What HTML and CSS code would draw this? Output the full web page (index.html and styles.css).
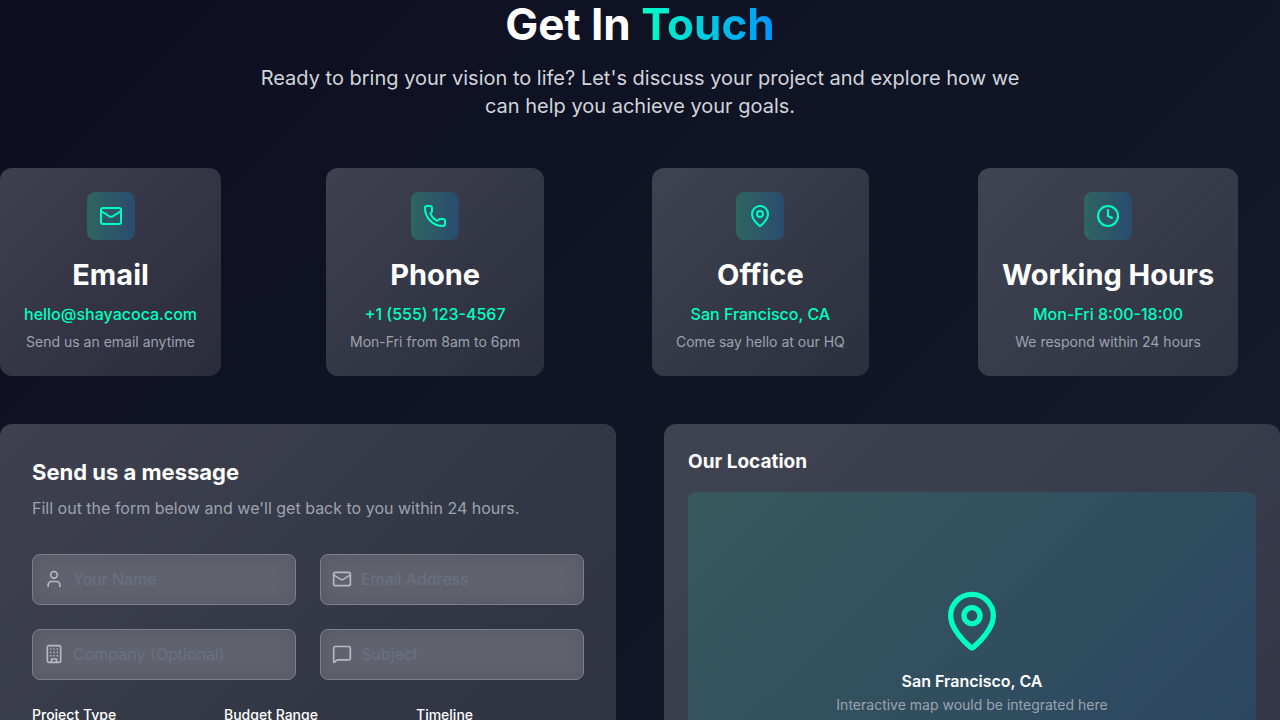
FILE: index.html
```html
<!DOCTYPE html>
<html lang="en">
<head>
<meta charset="utf-8">
<meta name="viewport" content="width=device-width, initial-scale=1">
<title>Get In Touch</title>
<link rel="stylesheet" href="styles.css">
</head>
<body>
<svg class="sprite" aria-hidden="true">
  <symbol id="mail" viewBox="0 0 24 24"><rect x="2" y="4" width="20" height="16" rx="2"/><path d="m22 7-8.991 5.727a2 2 0 0 1-2.009 0L2 7"/></symbol>
  <symbol id="phone" viewBox="0 0 24 24"><path d="M13.832 16.568a1 1 0 0 0 1.213-.303l.355-.465A2 2 0 0 1 17 15h3a2 2 0 0 1 2 2v3a2 2 0 0 1-2 2A18 18 0 0 1 2 4a2 2 0 0 1 2-2h3a2 2 0 0 1 2 2v3a2 2 0 0 1-.8 1.6l-.468.351a1 1 0 0 0-.292 1.233 14 14 0 0 0 6.392 6.384"/></symbol>
  <symbol id="pin" viewBox="0 0 24 24"><path d="M20 10c0 4.993-5.539 10.193-7.399 11.799a1 1 0 0 1-1.202 0C9.539 20.193 4 14.993 4 10a8 8 0 0 1 16 0"/><circle cx="12" cy="10" r="3"/></symbol>
  <symbol id="clock" viewBox="0 0 24 24"><circle cx="12" cy="12" r="10"/><path d="M12 6v6l4 2"/></symbol>
  <symbol id="user" viewBox="0 0 24 24"><path d="M19 21v-2a4 4 0 0 0-4-4H9a4 4 0 0 0-4 4v2"/><circle cx="12" cy="7" r="4"/></symbol>
  <symbol id="building" viewBox="0 0 24 24"><rect x="4" y="2" width="16" height="20" rx="2"/><path d="M9 22v-4h6v4M8 6h.01M16 6h.01M12 6h.01M12 10h.01M12 14h.01M16 10h.01M16 14h.01M8 10h.01M8 14h.01"/></symbol>
  <symbol id="message" viewBox="0 0 24 24"><path d="M22 17a2 2 0 0 1-2 2H6.828a2 2 0 0 0-1.414.586l-2.202 2.202A.71.71 0 0 1 2 21.286V5a2 2 0 0 1 2-2h16a2 2 0 0 1 2 2z"/></symbol>
</svg>
<main class="contact">
  <header class="intro">
    <h1 class="title">Get In <span class="accent">Touch</span></h1>
    <p class="lead">Ready to bring your vision to life? Let's discuss your project and explore how we can help you achieve your goals.</p>
  </header>

  <section class="cards">
    <article class="card">
      <span class="tile"><svg class="icon"><use href="#mail"/></svg></span>
      <h2 class="card-title">Email</h2>
      <p class="card-value">hello@shayacoca.com</p>
      <p class="card-note">Send us an email anytime</p>
    </article>
    <article class="card">
      <span class="tile"><svg class="icon"><use href="#phone"/></svg></span>
      <h2 class="card-title">Phone</h2>
      <p class="card-value">+1 (555) 123-4567</p>
      <p class="card-note">Mon-Fri from 8am to 6pm</p>
    </article>
    <article class="card">
      <span class="tile"><svg class="icon"><use href="#pin"/></svg></span>
      <h2 class="card-title">Office</h2>
      <p class="card-value">San Francisco, CA</p>
      <p class="card-note">Come say hello at our HQ</p>
    </article>
    <article class="card">
      <span class="tile"><svg class="icon"><use href="#clock"/></svg></span>
      <h2 class="card-title">Working Hours</h2>
      <p class="card-value">Mon-Fri 8:00-18:00</p>
      <p class="card-note">We respond within 24 hours</p>
    </article>
  </section>

  <section class="panels">
    <form class="panel form-panel">
      <h2 class="form-title">Send us a message</h2>
      <p class="form-note">Fill out the form below and we'll get back to you within 24 hours.</p>
      <div class="fields">
        <label class="field"><svg class="icon field-icon"><use href="#user"/></svg><input class="input" type="text" placeholder="Your Name" aria-label="Your Name"></label>
        <label class="field"><svg class="icon field-icon"><use href="#mail"/></svg><input class="input" type="email" placeholder="Email Address" aria-label="Email Address"></label>
        <label class="field"><svg class="icon field-icon"><use href="#building"/></svg><input class="input" type="text" placeholder="Company (Optional)" aria-label="Company (Optional)"></label>
        <label class="field"><svg class="icon field-icon"><use href="#message"/></svg><input class="input" type="text" placeholder="Subject" aria-label="Subject"></label>
      </div>
      <div class="choices">
        <div class="choice"><label class="choice-label" for="type">Project Type</label><select class="select" id="type"></select></div>
        <div class="choice"><label class="choice-label" for="budget">Budget Range</label><select class="select" id="budget"></select></div>
        <div class="choice"><label class="choice-label" for="timeline">Timeline</label><select class="select" id="timeline"></select></div>
      </div>
    </form>
    <section class="panel map-panel">
      <h2 class="map-title">Our Location</h2>
      <div class="map">
        <svg class="icon map-pin"><use href="#pin"/></svg>
        <p class="map-place">San Francisco, CA</p>
        <p class="map-note">Interactive map would be integrated here</p>
      </div>
    </section>
  </section>
</main>
</body>
</html>
```
FILE: styles.css
```css
* { box-sizing: border-box; }
html { scrollbar-width: none; }
body {
  margin: 0;
  min-height: 100vh;
  background: linear-gradient(135deg, #0e0e22 0%, #101525 50%, #181d30 100%);
  color: #fff;
  font-family: Inter, "Liberation Sans", sans-serif;
  font-size: 16px;
  line-height: 24px;
}
h1, h2, p { margin: 0; }
.sprite { position: absolute; width: 0; height: 0; }
.icon {
  display: block;
  width: 24px;
  height: 24px;
  fill: none;
  stroke: currentColor;
  stroke-width: 2;
  stroke-linecap: round;
  stroke-linejoin: round;
}

.intro { text-align: center; }
.title {
  margin-bottom: 16px;
  font-size: 44px;
  line-height: 48px;
  font-weight: 700;
}
.accent {
  background: linear-gradient(90deg, #00ffc2, #0095ff);
  -webkit-background-clip: text;
  background-clip: text;
  color: transparent;
}
.lead {
  max-width: 768px;
  margin: 0 auto;
  color: #d1d5db;
  font-size: 20px;
  line-height: 28px;
}

.cards {
  display: grid;
  grid-template-columns: repeat(4, 1fr);
  justify-items: start;
  gap: 24px;
  margin-top: 48px;
}
.card {
  padding: 24px;
  border-radius: 12px;
  background: linear-gradient(135deg, rgba(255,255,255,.2), rgba(255,255,255,.11));
  text-align: center;
}
.tile {
  display: grid;
  place-items: center;
  width: 48px;
  height: 48px;
  margin: 0 auto 16px;
  border-radius: 8px;
  background: linear-gradient(90deg, #2e6560, #2a4c6e);
  color: #00ffc2;
}
.card-title {
  margin-bottom: 8px;
  font-size: 29px;
  line-height: 38px;
  font-weight: 700;
}
.card-value { margin-bottom: 6px; color: #00ffc2; font-weight: 500; }
.card-note { color: #9ca3af; font-size: 14px; line-height: 20px; }

.panels {
  display: grid;
  grid-template-columns: 1fr 1fr;
  gap: 48px;
  margin-top: 48px;
}
.panel {
  border-radius: 12px;
  background: linear-gradient(135deg, rgba(255,255,255,.2), rgba(255,255,255,.11));
}
.form-panel { padding: 32px; }
.form-title { margin-bottom: 8px; font-size: 22px; line-height: 32px; font-weight: 700; }
.form-note { margin-bottom: 34px; color: #9ca3af; }
.fields { display: grid; grid-template-columns: 1fr 1fr; gap: 24px; }
.field { position: relative; color: #b4b9c4; }
.field-icon { position: absolute; left: 12px; top: 15px; width: 20px; height: 20px; }
.input {
  display: block;
  width: 100%;
  height: 51px;
  padding: 0 16px 2px 40px;
  border: 1px solid #7c7f89;
  border-radius: 8px;
  background: #61636e;
  box-shadow: inset 0 0 20px #555762;
  color: #fff;
  font: inherit;
}
.input::placeholder { color: #6b7280; opacity: 1; }
.choices { display: grid; grid-template-columns: repeat(3, 1fr); gap: 24px; margin-top: 24px; }
.choice-label { display: block; margin-bottom: 8px; font-size: 14px; line-height: 22px; font-weight: 500; }
.select { width: 100%; height: 51px; border: 1px solid #7c7f89; border-radius: 8px; background: #5d5f6a; color: #fff; }

.map-panel { padding: 24px; }
.map-title { margin-bottom: 16px; font-size: 19px; line-height: 28px; font-weight: 700; }
.map {
  display: flex;
  flex-direction: column;
  align-items: center;
  justify-content: center;
  height: 320px;
  border-radius: 8px;
  background: linear-gradient(135deg, rgba(0,255,194,.12), rgba(0,149,255,.14));
}
.map-pin { width: 64px; height: 64px; margin-bottom: 16px; color: #00ffc2; }
.map-place { margin-bottom: 2px; font-weight: 600; }
.map-note { color: #9ca3af; font-size: 14px; line-height: 20px; }
```
